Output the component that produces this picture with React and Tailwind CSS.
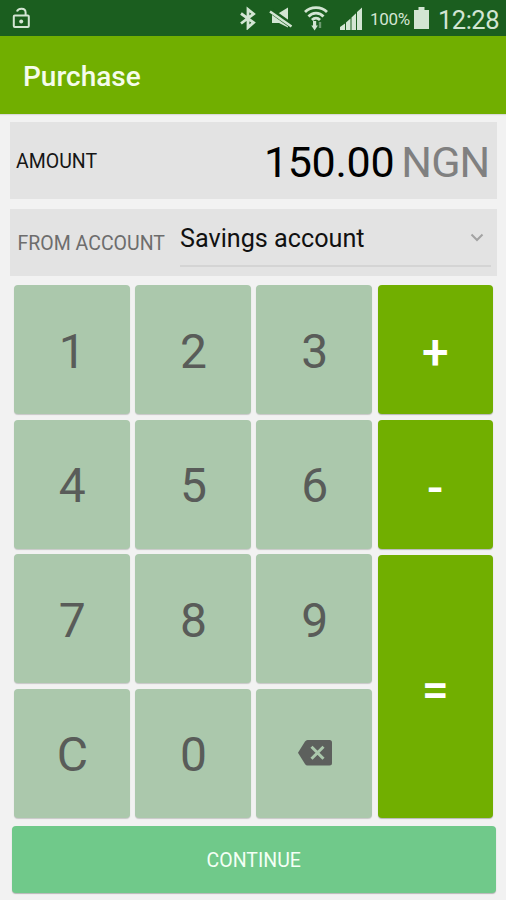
const keys = ['1', '2', '3', '4', '5', '6', '7', '8', '9', 'C', '0', 'back']

function StatusBar() {
  return (
    <div className="flex h-[35.5px] shrink-0 items-center bg-[#1b5e1f] pl-3 text-[#d3e5d3]">
      <svg width="19" height="22" viewBox="0 0 19 22" fill="none" stroke="currentColor" strokeWidth="2">
        <rect x="1.8" y="8.5" width="15" height="11.4" rx="1" />
        <path d="M5 4.6C6 .8 13.600 .4 13.600 5.400V9" />
        <circle cx="9.2" cy="14.4" r="2" fill="currentColor" stroke="none" />
      </svg>
      <div className="ml-auto flex items-center">
        <svg width="18" height="24" viewBox="0 0 18 24" fill="none" stroke="currentColor" strokeWidth="2.8">
          <path d="M2 7.500l12.600 9.100L9 21.500V3.500l5.600 4.400L2 17.500" />
        </svg>
        <svg className="ml-[12px]" width="24" height="24" viewBox="0 0 24 24">
          <path d="M3 7h7l9-5.500v20L10 17H3z" fill="currentColor" />
          <path d="M1.500 4.500l21 15" stroke="#1b5e1f" strokeWidth="5.500" />
          <path d="M1 5.500l21.500 15" stroke="currentColor" strokeWidth="2.500" />
        </svg>
        <svg className="ml-[10px]" width="26" height="26" viewBox="0 0 26 26" fill="none" stroke="currentColor" strokeWidth="2.700">
          <path d="M2 7C7.500 1.200 18.500 1.200 24 7M5.500 11.500c4-4.600 11-4.600 15 0M9 15c2.400-2.600 5.600-2.600 8 0" />
          <path d="M11.600 16v6" strokeWidth="3.200" />
          <path d="M8.300 20.500h6.600l-3.300 5z" fill="currentColor" stroke="none" />
          <path d="M17 17v6" strokeWidth="2.400" opacity=".45" />
        </svg>
        <svg className="ml-[10px] mt-[2px]" width="24" height="24" viewBox="0 0 24 24" fill="currentColor">
          <path d="M1 23v-3l5-3.600V23zM7 23v-7.500l4.500-4V23zM12.500 23V10.500l4.500-4.300V23zM18 23V5l5-4.500V23z" />
        </svg>
        <span className="ml-[7px] mt-[3px] w-[41px] whitespace-nowrap text-[17px] tracking-[-0.3px]">100%</span>
        <svg className="ml-[3px]" width="15" height="24" viewBox="0 0 15 24" fill="currentColor">
          <path d="M4.500 1h6v3H15v19H0V4h4.500z" />
        </svg>
        <span className="ml-[9px] mt-[5px] w-[68px] whitespace-nowrap text-[25.5px] leading-none tracking-[-0.5px]">12:28</span>
      </div>
    </div>
  )
}

function BackspaceIcon() {
  return (
    <svg className="-mt-[4px]" width="34" height="26" viewBox="0 0 34 26">
      <path d="M9.500 0H31.500a2.500 2.500 0 0 1 2.500 2.500V23a2.500 2.500 0 0 1-2.500 2.500H9.500Q8 25.500 7 24L0 12.800 7 1.500Q8 0 9.500 0z" fill="#5d605d" />
      <path d="M13.500 6.800l12 12M25.500 6.800l-12 12" stroke="#abc8ac" strokeWidth="3" />
    </svg>
  )
}

function Keypad() {
  return (
    <div className="ml-[14px] mt-[9.5px] flex h-[532.5px] w-[479px] shrink-0 gap-[5.5px]">
      <div className="grid w-[358px] grid-cols-3 grid-rows-4 gap-x-[5.500px] gap-y-[5.500px]">
        {keys.map((key) => (
          <button
            key={key}
            className="flex items-center justify-center rounded-[4px] bg-[#abc8ac] pl-px pt-[4px] text-[48px] leading-none text-[#595c59] shadow-[0_1px_1px_rgba(0,0,0,0.18)]"
          >
            {key === 'back' ? <BackspaceIcon /> : key}
          </button>
        ))}
      </div>
      <div className="flex w-[115.5px] flex-col gap-[6px] text-[48px] font-medium leading-none text-white">
        <Operator label="+" size="h-[128.500px]" />
        <Operator label="-" size="h-[129px]" />
        <Operator label="=" size="h-[263px]" />
      </div>
    </div>
  )
}

function Operator({ label, size }) {
  return (
    <button className={`${size} flex items-center justify-center rounded-[4px] bg-[#71af00] pt-[7px] shadow-[0_1px_1px_rgba(0,0,0,0.25)]`}>
      {label}
    </button>
  )
}

export default function App() {
  return (
    <div className="flex h-[900px] w-[506px] flex-col overflow-hidden bg-[#f2f2f2] font-['Roboto',sans-serif]">
      <StatusBar />
      <header className="flex h-[78.5px] shrink-0 items-center bg-[#71af00] pl-[23px] pt-1 shadow-[0_1px_1px_rgba(0,0,0,0.1)]">
        <h1 className="text-[28px] font-medium text-[#f5fceb]">Purchase</h1>
      </header>

      <section className="ml-[10px] mt-2 flex h-[76.5px] w-[486.500px] shrink-0 items-center bg-[#e3e3e3] pl-[6px] pr-[7px]">
        <span className="mt-[2px] text-[19.5px] text-[#161616]">AMOUNT</span>
        <span className="ml-auto mt-[4px] text-[43px] leading-none tracking-[-0.3px] text-black">150.00</span>
        <span className="ml-[7px] mt-[4px] text-[43px] leading-none tracking-[-0.8px] text-[#808080]">NGN</span>
      </section>

      <section className="ml-[10px] mt-[10px] flex h-[67px] w-[486.500px] shrink-0 bg-[#e3e3e3] pl-[7.500px] pr-[6px]">
        <span className="mt-[20px] w-[162.500px] whitespace-nowrap text-[19.5px] leading-[30px] text-[#6d6d6d]">FROM ACCOUNT</span>
        <div className="flex h-[58px] flex-1 items-center justify-between border-b-2 border-[#d4d4d4] pr-[7px]">
          <span className="mt-[5px] text-[25.2px] text-[#111]">Savings account</span>
          <svg className="mt-px" width="14" height="9" viewBox="0 0 14 9" fill="none" stroke="#a3a3a3" strokeWidth="2">
            <path d="M1.500 1.500L7 7l5.500-5.500" />
          </svg>
        </div>
      </section>

      <Keypad />

      <button className="ml-[11.5px] mt-2 h-[67.5px] w-[484.5px] shrink-0 rounded-[4px] bg-[#70c98a] pt-[3px] text-[19.5px] text-[#f3fff5] shadow-[0_1px_1px_rgba(0,0,0,0.25)]">
        CONTINUE
      </button>
    </div>
  )
}
